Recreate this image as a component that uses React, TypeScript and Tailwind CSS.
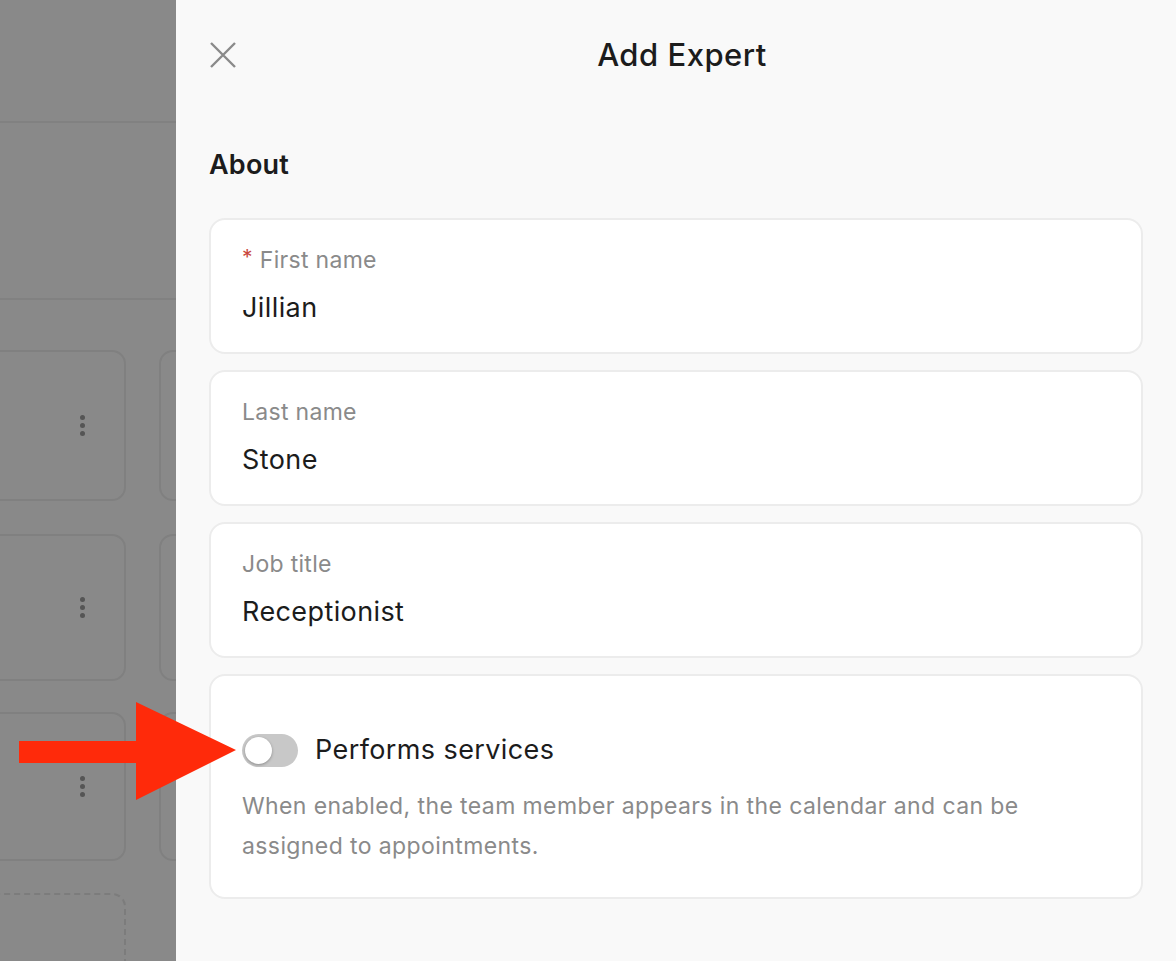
const FONT = { fontFamily: "Inter, 'Noto Sans', sans-serif" }

function Kebab() {
  return (
    <div className="flex flex-col items-center gap-[3px]">
      <span className="h-[5px] w-[5px] rounded-full bg-[#555]" />
      <span className="h-[5px] w-[5px] rounded-full bg-[#555]" />
      <span className="h-[5px] w-[5px] rounded-full bg-[#555]" />
    </div>
  )
}

function Backdrop() {
  const rows = [
    { h: "h-[151px]", mt: "mt-[50px]" },
    { h: "h-[147px]", mt: "mt-[33px]" },
    { h: "h-[149px]", mt: "mt-[31px]" },
  ]
  return (
    <div className="w-[176px] shrink-0 h-[961px] overflow-hidden bg-[#898989] flex flex-col">
      <div className="h-[123px] shrink-0 border-b-2 border-[#818181]" />
      <div className="h-[177px] shrink-0 border-b-2 border-[#818181]" />
      {rows.map((r, i) => (
        <div key={i} className={`flex gap-[33px] ml-[-100px] ${r.mt}`}>
          <div className={`${r.h} w-[226px] shrink-0 rounded-[14px] border-2 border-[#808080] flex items-center justify-end pr-[39px]`}>
            <Kebab />
          </div>
          <div className={`${r.h} w-[200px] shrink-0 rounded-[14px] border-2 border-[#808080]`} />
        </div>
      ))}
      <div className="flex gap-[33px] ml-[-100px] mt-[32px]">
        <div className="h-[120px] w-[226px] shrink-0 rounded-[14px] border-2 border-dashed border-[#7c7c7c]" />
      </div>
    </div>
  )
}

function Field({ label, value, required }: { label: string; value: string; required?: boolean }) {
  return (
    <div className="rounded-[16px] border-2 border-[#ececec] bg-white px-[31px] pt-[25px] pb-[27px]">
      <div className="flex items-center gap-[7px] text-[23px] leading-[30px] tracking-[0.3px] text-[#8a8a8a]">
        {required && <span className="text-[#c9473d] text-[21px] leading-[20px] mt-[-4px]">*</span>}
        <span>{label}</span>
      </div>
      <div className="mt-[16px] text-[27px] leading-[34px] tracking-[0.4px] text-[#1c1c1c]">{value}</div>
    </div>
  )
}

function Toggle() {
  return (
    <div className="relative h-[33px] w-[56px] shrink-0 rounded-full bg-[#c8c8c8]">
      <span className="absolute left-[3px] top-[3px] h-[27px] w-[27px] rounded-full bg-white shadow-[0_1px_3px_rgba(0,0,0,0.3)]" />
    </div>
  )
}

export default function App() {
  return (
    <div className="relative flex w-[1176px] h-[961px] overflow-hidden bg-[#f9f9f9]" style={FONT}>
      <Backdrop />
      <aside className="flex-1 bg-[#f9f9f9] flex flex-col">
        <header className="relative h-[110px] flex items-center justify-center">
          <button className="absolute left-[33px] top-[41px] text-[#8a8a8a]">
            <svg width="28" height="28" viewBox="0 0 28 28" fill="none" stroke="currentColor" strokeWidth="2.4">
              <path d="M2 2 L26 26 M26 2 L2 26" />
            </svg>
          </button>
          <h1 className="text-[31px] font-medium text-[#1c1c1c] tracking-[0.5px] ml-[12px]">Add Expert</h1>
        </header>
        <div className="px-[33px]">
          <h2 className="mt-[37px] text-[27px] leading-[36px] font-semibold tracking-[0.2px] text-[#1c1c1c]">About</h2>
          <div className="mt-[35px] flex flex-col gap-[16px]">
            <Field label="First name" value="Jillian" required />
            <Field label="Last name" value="Stone" />
            <Field label="Job title" value="Receptionist" />
            <div className="rounded-[16px] border-2 border-[#ececec] bg-white px-[31px] pt-[57px] pb-[31px]">
              <div className="flex items-center gap-[17px]">
                <Toggle />
                <span className="text-[27px] leading-[34px] tracking-[0.4px] text-[#1c1c1c]">Performs services</span>
              </div>
              <p className="mt-[19px] max-w-[830px] text-[23px] leading-[40px] tracking-[0.4px] text-[#8a8a8a]">
                When enabled, the team member appears in the calendar and can be assigned to appointments.
              </p>
            </div>
          </div>
        </div>
      </aside>
      <svg className="absolute left-0 top-0 pointer-events-none" width="260" height="961" viewBox="0 0 260 961">
        <polygon points="19,741 136,741 136,702 236,750 136,800 136,763 19,763" fill="#ff2a0a" />
      </svg>
    </div>
  )
}
